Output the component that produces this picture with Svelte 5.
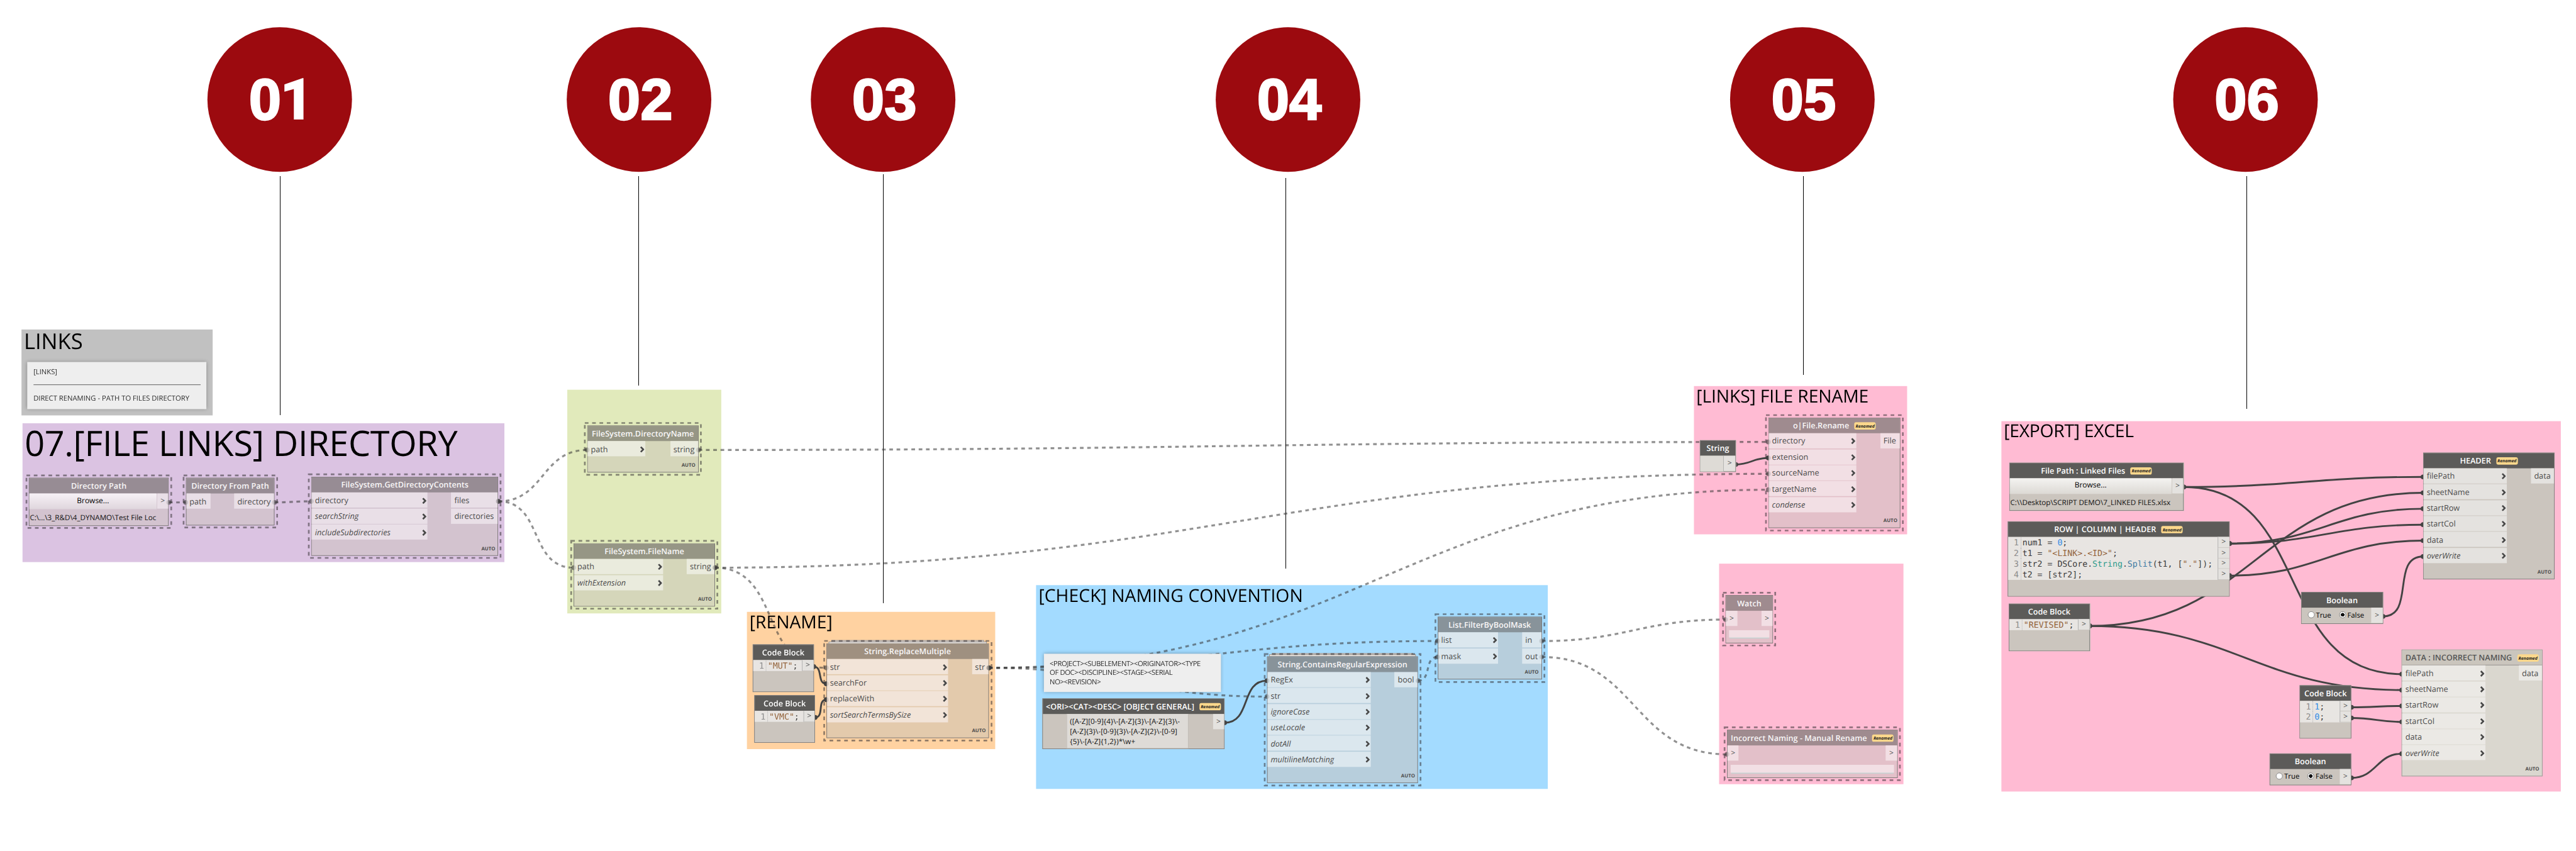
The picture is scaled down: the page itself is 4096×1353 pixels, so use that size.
<script>
  const HEAD = 30.7;
  const PITCH = 30.4;

  const steps = [
    { n: '01', cx: 534.3, lx: 534.5, y1: 336, y2: 792 },
    { n: '02', cx: 1220, lx: 1219.5, y1: 336, y2: 736 },
    { n: '03', cx: 1686, lx: 1686.5, y1: 332, y2: 1152 },
    { n: '04', cx: 2459, lx: 2454.5, y1: 340, y2: 1086 },
    { n: '05', cx: 3441, lx: 3442.5, y1: 336, y2: 716 },
    { n: '06', cx: 4287, lx: 4289.5, y1: 336, y2: 780 }
  ];

  const groups = [
    { x: 41, y: 629, w: 365, h: 164, c: 'gray', t: 'LINKS', s: 41.5, b: 667, tx: 4.5, ls: 0 },
    { x: 43, y: 808.3, w: 920, h: 264.5, c: 'purple', t: '07.[FILE LINKS] DIRECTORY', s: 67, b: 871, tx: 4, ls: -0.4 },
    { x: 1083.3, y: 744.3, w: 293.7, h: 426.5, c: 'green', t: '' },
    { x: 1425.8, y: 1168.3, w: 474.2, h: 261.4, c: 'orange', t: '[RENAME]', s: 34, b: 1200.5, tx: 5, ls: 0 },
    { x: 1977.8, y: 1117, w: 977, h: 389, c: 'blue', t: '[CHECK] NAMING CONVENTION', s: 34, b: 1149.5, tx: 5, ls: 0.05 },
    { x: 3233.7, y: 737, w: 407.3, h: 283, c: 'pink', t: '[LINKS] FILE RENAME', s: 34, b: 769, tx: 5, ls: -0.2 },
    { x: 3282.3, y: 1076.3, w: 352, h: 420.7, c: 'pink', t: '' },
    { x: 3820.7, y: 803.5, w: 1068, h: 707.5, c: 'pink', t: '[EXPORT] EXCEL', s: 34, b: 835.5, tx: 5, ls: -0.35 }
  ];

  // Leading "*" marks an optional (italic) input.
  const nodes = {
    dirPath: { x: 54.9, y: 912.3, w: 267.4, h: 91.4, th: 'purple', kind: 'path', t: 'Directory Path', file: 'C:\\...\\3_R&D\\4_DYNAMO\\Test File Loc' },
    fromPath: { x: 354.6, y: 912.3, w: 169.6, h: 90.4, th: 'purple', kind: 'fn', t: 'Directory From Path', ins: ['path'], outs: ['directory'], iw: 46, ow: 76, plain: true },
    contents: { x: 594.4, y: 910.3, w: 357.1, h: 150.5, th: 'purple', kind: 'fn', t: 'FileSystem.GetDirectoryContents', ins: ['directory', '*searchString', '*includeSubdirectories'], outs: ['files', 'directories'], iw: 221, ow: 89 },
    dirName: { x: 1121, y: 812.3, w: 212.6, h: 89.8, th: 'green', kind: 'fn', t: 'FileSystem.DirectoryName', ins: ['path'], outs: ['string'], iw: 109.5, ow: 53 },
    fileName: { x: 1095.2, y: 1037, w: 270, h: 120.5, th: 'green', kind: 'fn', t: 'FileSystem.FileName', ins: ['path', '*withExtension'], outs: ['string'], iw: 169.5, ow: 53 },
    mut: { x: 1437.2, y: 1230, w: 116.4, h: 91, th: 'solid', kind: 'code', t: 'Code Block', code: [[['str', '"MUT"'], ['', ';']]] },
    vmc: { x: 1440, y: 1327, w: 116.2, h: 90.6, th: 'solid', kind: 'code', t: 'Code Block', code: [[['str', '"VMC"'], ['', ';']]] },
    replace: { x: 1577.5, y: 1228.2, w: 310.5, h: 181.2, th: 'orange', kind: 'fn', stack: true, t: 'String.ReplaceMultiple', ins: ['str', 'searchFor', 'replaceWith', '*sortSearchTermsBySize'], outs: ['str'], iw: 231, ow: 31.5 },
    regex: { x: 2418.9, y: 1252.7, w: 288.5, h: 242, th: 'blue', kind: 'fn', stack: true, t: 'String.ContainsRegularExpression', ins: ['RegEx', 'str', '*ignoreCase', '*useLocale', '*dotAll', '*multilineMatching'], outs: ['bool'], iw: 197, ow: 44 },
    mask: { x: 2744.5, y: 1177, w: 199, h: 120.4, th: 'blue', kind: 'fn', t: 'List.FilterByBoolMask', ins: ['list', 'mask'], outs: ['in', 'out'], iw: 114.5, ow: 36.5 },
    ori: { x: 1989.7, y: 1333, w: 348.3, h: 97.3, th: 'solid', kind: 'text', t: '<ORI><CAT><DESC> [OBJECT GENERAL]', renamed: true, lines: ['([A-Z][0-9]{4}\\-[A-Z]{3}\\-[A-Z]{3}\\-', '[A-Z]{3}\\-[0-9]{3}\\-[A-Z]{2}\\-[0-9]', '{5}\\-[A-Z]{1,2})*\\w+'] },
    str: { x: 3245.4, y: 840, w: 68.4, h: 61, th: 'solid', kind: 'string', t: 'String' },
    rename: { x: 3376, y: 797, w: 252.3, h: 211.3, th: 'pink', kind: 'fn', t: 'o|File.Rename', renamed: true, ins: ['directory', 'extension', 'sourceName', 'targetName', '*condense'], outs: ['File'], iw: 166.5, ow: 37.5 },
    watch: { x: 3294.3, y: 1136, w: 90.7, h: 91.7, th: 'pink', kind: 'watch', t: 'Watch' },
    wrong: { x: 3297, y: 1393.3, w: 325.7, h: 91.7, th: 'pink', kind: 'watch', t: 'Incorrect Naming - Manual Rename', renamed: true },
    linked: { x: 3836, y: 883, w: 333, h: 91.7, th: 'solid', kind: 'path', t: 'File Path : Linked Files', renamed: true, file: 'C:\\\\Desktop\\SCRIPT DEMO\\7_LINKED FILES.xlsx' },
    row: {
      x: 3832.5, y: 995, w: 424, h: 144, th: 'solid', kind: 'code', t: 'ROW | COLUMN | HEADER', renamed: true,
      code: [
        [['', 'num1 = '], ['num', '0'], ['', ';']],
        [['', 't1 = '], ['str', '"<LINK>.<ID>"'], ['', ';']],
        [['', 'str2 = DSCore.'], ['cls', 'String'], ['', '.'], ['fnc', 'Split'], ['', '(t1, ['], ['str', '"."'], ['', ']);']],
        [['', 't2 = [str2];']]
      ]
    },
    revised: { x: 3835, y: 1152.3, w: 154.6, h: 90.5, th: 'solid', kind: 'code', t: 'Code Block', code: [[['str', '"REVISED"'], ['', ';']]] },
    header: { x: 4626, y: 863.7, w: 251, h: 242, th: 'solid', kind: 'fn', t: 'HEADER', renamed: true, ins: ['filePath', 'sheetName', 'startRow', 'startCol', 'data', '*overWrite'], outs: ['data'], iw: 159, ow: 44 },
    bool1: { x: 4393, y: 1130, w: 156.6, h: 61, th: 'solid', kind: 'bool', t: 'Boolean' },
    ones: { x: 4390.3, y: 1307.6, w: 99, h: 102, th: 'solid', kind: 'code', t: 'Code Block', code: [[['num', '1'], ['', ';']], [['num', '0'], ['', ';']]] },
    bool2: { x: 4332.5, y: 1438.2, w: 156.8, h: 61, th: 'solid', kind: 'bool', t: 'Boolean' },
    data: { x: 4585.4, y: 1240.2, w: 268.4, h: 241.6, th: 'idle', kind: 'fn', t: 'DATA : INCORRECT NAMING', renamed: true, ins: ['filePath', 'sheetName', 'startRow', 'startCol', 'data', '*overWrite'], outs: ['data'], iw: 159, ow: 44 }
  };

  const frozen = (n) => n.th !== 'solid' && n.th !== 'idle';

  // [from node, output index, to node, input index, dashed]
  const links = [
    ['dirPath', 0, 'fromPath', 0, 1], ['fromPath', 0, 'contents', 0, 1],
    ['contents', 0, 'dirName', 0, 1], ['contents', 0, 'fileName', 0, 1],
    ['dirName', 0, 'rename', 0, 1], ['fileName', 0, 'rename', 2, 1], ['fileName', 0, 'replace', 0, 1],
    ['replace', 0, 'rename', 3, 1], ['replace', 0, 'mask', 0, 1], ['replace', 0, 'regex', 1, 1],
    ['regex', 0, 'mask', 1, 1], ['mask', 0, 'watch', 0, 1], ['mask', 1, 'wrong', 0, 1],
    ['mut', 0, 'replace', 1, 0], ['vmc', 0, 'replace', 2, 0], ['ori', 0, 'regex', 0, 0], ['str', 0, 'rename', 1, 0],
    ['linked', 0, 'header', 0, 0], ['linked', 0, 'data', 0, 0],
    ['row', 0, 'header', 2, 0], ['row', 0, 'header', 3, 0], ['row', 3, 'header', 4, 0],
    ['revised', 0, 'header', 1, 0], ['revised', 0, 'data', 1, 0],
    ['bool1', 0, 'header', 5, 0], ['ones', 0, 'data', 2, 0], ['ones', 1, 'data', 3, 0], ['bool2', 0, 'data', 5, 0]
  ];

  const wires = links.map(([a, i, b, j, dashed]) => {
    const s = nodes[a];
    const e = nodes[b];
    const x0 = s.x + s.w;
    const y0 = s.kind === 'code' ? s.y + 42.6 + 20.4 * i : s.y + HEAD + 16 + PITCH * i;
    const x1 = e.x;
    const y1 = e.y + HEAD + 16 + PITCH * j;
    const off = 0.45 * Math.hypot(x1 - x0, y1 - y0);
    return { x0, y0, x1, y1, dashed, s, e, d: `M${x0} ${y0}C${x0 + off} ${y0} ${x1 - off} ${y1} ${x1} ${y1}` };
  });
</script>

{#snippet port(label, cls, chevron)}
  <div class="port {cls}" class:opt={label[0] === '*'}>
    <span>{label.replace('*', '')}</span>
    {#if chevron}
      <svg class="chev" viewBox="0 0 8 12"><path d="M1.3 1.2 6.1 6 1.3 10.8" /></svg>
    {/if}
  </div>
{/snippet}

{#snippet radio(label, on)}
  <span class="radio"><i class:on></i>{label}</span>
{/snippet}

{#snippet nodeBox(n)}
  <article class="node {n.th}" style="left:{n.x}px;top:{n.y}px;width:{n.w}px;height:{n.h}px">
    {#if n.stack}<div class="sheet back"></div><div class="sheet"></div>{/if}
    {#if frozen(n)}
      <svg class="outline" width={n.w + 12} height={n.h + 12}>
        <rect x="1.5" y="1.5" width={n.w + 9} height={n.h + 9} />
      </svg>
    {/if}
    <div class="card">
      <header>
        <h3>{n.t}</h3>
        {#if n.renamed}<em class="badge">Renamed</em>{/if}
      </header>
      {#if n.kind === 'fn'}
        <div class="body">
          <div class="col" style="width:{n.iw}px">
            {#each n.ins as p}{@render port(p, 'in', !n.plain)}{/each}
          </div>
          <div class="col" style="width:{n.ow}px">
            {#each n.outs as p}{@render port(p, 'out', false)}{/each}
          </div>
        </div>
        {#if !n.plain}<div class="auto">AUTO</div>{/if}
      {:else if n.kind === 'path'}
        <div class="body">
          <div class="browse">Browse...</div>
          {@render port('>', 'gt', false)}
        </div>
        <div class="file">{n.file}</div>
      {:else if n.kind === 'code'}
        <div class="editor">
          {#each n.code as line, i}
            <div class="line">
              <span class="no">{i + 1}</span>
              <code>{#each line as [c, s]}<span class={c}>{s}</span>{/each}</code>
              <span class="gtc">&gt;</span>
            </div>
          {/each}
        </div>
      {:else if n.kind === 'text'}
        <div class="body grow">
          <div class="area">{#each n.lines as l}<div>{l}</div>{/each}</div>
          {@render port('>', 'gt', false)}
        </div>
      {:else if n.kind === 'string'}
        <div class="body grow">
          <div class="blank"></div>
          {@render port('>', 'gt', false)}
        </div>
      {:else if n.kind === 'watch'}
        <div class="body">
          {@render port('>', 'gt', false)}
          {@render port('>', 'gt', false)}
        </div>
        <div class="view"></div>
      {:else}
        <div class="body grow">
          <div class="radios">{@render radio('True', false)}{@render radio('False', true)}</div>
          {@render port('>', 'gt', false)}
        </div>
      {/if}
    </div>
  </article>
{/snippet}

<div class="window">
  <main class="stage">
    {#each groups as g}
      <section class="group {g.c}" style="left:{g.x}px;top:{g.y}px;width:{g.w}px;height:{g.h}px">
        {#if g.t}
          <h2 style="font-size:{g.s}px;letter-spacing:{g.ls}px;padding-left:{g.tx}px;margin-top:{g.b - g.y - g.s * 1.069}px">{g.t}</h2>
        {/if}
      </section>
    {/each}

    <svg class="wires" viewBox="0 0 4918 1624">
      {#each steps as s}
        <line class="lead" x1={s.lx} y1={s.y1} x2={s.lx} y2={s.y2} />
      {/each}
      {#each wires as w}
        <path d={w.d} class:dashed={w.dashed} />
        <circle class:soft={w.dashed} cx={w.x0} cy={w.y0} r="4.6" />
        <circle class:soft={w.dashed} cx={w.x1} cy={w.y1} r="4.6" />
      {/each}
    </svg>

    {#each Object.values(nodes) as n}{@render nodeBox(n)}{/each}

    <svg class="wires ghosts" viewBox="0 0 4918 1624">
      {#each wires as w}
        {#if frozen(w.s)}<circle cx={w.x0} cy={w.y0} r="4.6" />{/if}
        {#if frozen(w.e)}<circle cx={w.x1} cy={w.y1} r="4.6" />{/if}
      {/each}
    </svg>

    <aside class="note links">
      <p>[LINKS]</p>
      <hr />
      <p>DIRECT RENAMING - PATH TO FILES DIRECTORY</p>
    </aside>
    <aside class="note naming">
      <p>&lt;PROJECT&gt;&lt;SUBELEMENT&gt;&lt;ORIGINATOR&gt;&lt;TYPE</p>
      <p>OF DOC&gt;&lt;DISCIPLINE&gt;&lt;STAGE&gt;&lt;SERIAL</p>
      <p>NO&gt;&lt;REVISION&gt;</p>
    </aside>

    {#each steps as s}
      <div class="step" style="left:{s.cx - 138}px">
        <div>{#each s.n as d}<span class:one={d === '1'}>{d}</span>{/each}</div>
      </div>
    {/each}
  </main>
</div>

<style>
  :global(body) { margin: 0; background: #fff; }
  .window { width: 4096px; height: 1353px; overflow: hidden; background: #fff; }
  .stage {
    position: relative; width: 4918px; height: 1624px;
    transform: scale(0.83286); transform-origin: 0 0;
    font-family: "Open Sans", "Noto Sans", sans-serif; color: #222;
    text-rendering: geometricPrecision;
  }
  .stage *, .stage { box-sizing: border-box; }
  h2, h3, p { margin: 0; font-weight: 400; white-space: nowrap; }

  .step {
    position: absolute; top: 52px; width: 276px; height: 276px; border-radius: 50%;
    background: #9c0a0f; color: #fff; display: flex; align-items: center; justify-content: center;
    font: 700 111px/1 "Liberation Sans", Arial, sans-serif; padding: 1px 0 0 5px;
    -webkit-text-stroke: 3px #fff;
  }
  .step .one { font-family: Roboto, sans-serif; font-weight: 900; -webkit-text-stroke: 0; margin-left: -3px; }

  .group { position: absolute; display: flex; flex-direction: column; }
  .group h2 { color: #000; line-height: 1.362; }
  .group.gray { background: #c1c1c1; }
  .group.purple { background: #dbc3e2; }
  .group.green { background: #e1eabb; }
  .group.orange { background: #ffd2a1; }
  .group.blue { background: #a3dbff; }
  .group.pink { background: #ffbbd3; }

  .wires { position: absolute; left: 0; top: 0; width: 4918px; height: 1624px; }
  .wires .lead { stroke: #000; stroke-width: 1.2; shape-rendering: crispEdges; }
  .wires path { fill: none; stroke: #434343; stroke-width: 3.5; }
  .wires path.dashed { stroke: rgba(52, 52, 52, .54); stroke-width: 3.8; stroke-dasharray: 7 7; }
  .wires circle { fill: #434343; }
  .wires circle.soft { fill: rgba(58, 58, 58, .5); }
  .ghosts circle { fill: rgba(60, 60, 60, .17); }

  .note {
    position: absolute; background: #eee; box-shadow: 0 0 7px rgba(0, 0, 0, .3);
    color: #2c2c2c; font-size: 13.5px; line-height: 17.2px;
  }
  .note.links { left: 52.3px; top: 690.7px; width: 342px; height: 90.5px; padding: 10.5px 11px 0 11.5px; }
  .note.links hr { border: 0; height: 1.6px; background: #444; margin: 15.3px 0 15.3px; }
  .note.links p:last-child { line-height: 19px; }
  .note.naming { left: 1993px; top: 1247.7px; width: 337.8px; height: 73px; padding: 10.6px 0 0 11px; letter-spacing: -.45px; }

  .node { position: absolute; }
  .card {
    position: relative; width: 100%; height: 100%; display: flex; flex-direction: column;
    background: var(--body); border: 1.5px solid var(--edge);
  }
  .card header {
    flex: none; height: 29.2px; background: var(--head); color: var(--title); padding-top: 1px;
    display: flex; align-items: center; justify-content: center; gap: 10px;
  }
  h3 { font-size: 15.2px; font-weight: 600; line-height: 20px; }
  .badge {
    width: 41px; height: 14px; border-radius: 3.5px; background: #fcd88c; color: #222;
    font-size: 8.2px; font-weight: 700; line-height: 15px; text-align: center;
  }
  .body { display: flex; justify-content: space-between; }
  .body.grow { flex: 1; }
  .col { display: flex; flex-direction: column; gap: 1.4px; }
  .port {
    height: 29px; background: var(--port); color: #4c4c4c; font-size: 15.2px;
    display: flex; align-items: center; justify-content: space-between; padding: 1.6px 2px 0 6px; white-space: nowrap;
  }
  .port.opt { font-style: italic; }
  .port.gt { width: 21.3px; flex: none; color: #444; padding: 0; justify-content: center; font-size: 14.5px; }
  .chev { width: 8px; height: 12px; }
  .chev path { fill: none; stroke: #484848; stroke-width: 3.2; }
  .auto {
    margin-top: auto; padding: 0 5px 8px 0; text-align: right; color: #4d4d4d;
    font-size: 9.4px; font-weight: 700; line-height: 10px;
  }

  .outline { position: absolute; left: -6px; top: -6px; overflow: visible; }
  .outline rect { fill: none; stroke: rgba(50, 45, 50, .53); stroke-width: 3.2; stroke-dasharray: 7 7; }
  .sheet {
    position: absolute; left: 4.5px; right: 4.5px; top: -3.5px; height: 5px;
    background: #e3deda; border: 1px solid #8f8b86;
  }
  .sheet.back { left: 9.5px; right: 9px; top: -5.8px; background: #d5cdc8; }

  .node { --edge: #6d6a6a; --title: #f8f6f7; }
  .node.purple { --head: #978c94; --body: #d3c3cf; --port: #e9dfe7; }
  .node.green { --head: #969685; --body: #d5d6ba; --port: #eaebdd; }
  .node.orange { --head: #9f9080; --body: #e3caac; --port: #f2e4d8; }
  .node.blue { --head: #88939a; --body: #b7cedc; --port: #dbe7ee; }
  .node.pink { --head: #9f8b8f; --body: #e3c0c9; --port: #f2dfe4; }
  .node.solid { --head: #5c5b59; --body: #cbc5be; --port: #e4e2df; --edge: #767473; --title: #fff; }
  .node.idle { --head: #cac5bd; --body: #dad7cf; --port: #ebe9e5; --edge: #8e8c88; --title: #555; }
  .idle header { border-bottom: 1.5px solid #8e8c88; }

  .browse {
    flex: 1; margin-right: 1px; height: 30px; background: linear-gradient(#f4f3f1, #dcd9d4); color: #000;
    font-size: 14.4px; line-height: 27px; text-align: center;
  }
  .purple .browse { background: linear-gradient(#f7f1f6, #dfd6dd); }
  .file { color: #111; font-size: 14px; line-height: 19px; padding: 7px 0 0 1px; white-space: nowrap; }

  .editor { background: #e8e5e2; display: flex; flex-direction: column; padding-bottom: .4px; }
  .line { display: flex; height: 20.4px; font: 15.88px/22.4px "DejaVu Sans Mono", "Liberation Mono", monospace; color: #3c3c3c; }
  .no { width: 25px; padding-right: 3.5px; text-align: right; color: #8c8c8c; border-right: 1px dotted #aaa; }
  .line code { flex: 1; font: inherit; padding-left: 2.5px; white-space: pre; }
  .gtc {
    width: 21.5px; border-left: 1.2px solid #aaa; border-bottom: 1px solid #c4c0bb; background: #e4e2df;
    font: 14.5px/19px "Open Sans", sans-serif; text-align: center; color: #444;
  }
  .str { color: #94643c; }
  .num { color: #2f8be6; }
  .cls { color: #2e9c8c; }
  .fnc { color: #417ba3; }

  .area {
    width: 232.5px; margin-left: 45.5px; background: #dedbd7; border: 1px solid #bdb8b1; border-top: 0;
    color: #111; font-size: 14px; line-height: 19.4px; padding: 4.5px 0 0 5.5px; white-space: nowrap;
  }
  .blank { flex: 1; background: #dedbd6; border-right: 1px solid #aaa; }
  .view { height: 14.3px; margin: 8px 5.5px 0; background: var(--port); position: relative; box-shadow: 0 3px 0 -1px #c6d2d2; }
  .radios { display: flex; gap: 15px; padding: 0 0 3px 11.5px; align-items: center; font-size: 13.6px; color: #000; }
  .radio { display: flex; align-items: center; gap: 3px; }
  .radio i { width: 13px; height: 13px; border-radius: 50%; background: #fff; border: 1px solid #777; display: flex; }
  .radio i.on { background: radial-gradient(circle, #111 0 3.2px, #fff 3.8px); }
</style>
